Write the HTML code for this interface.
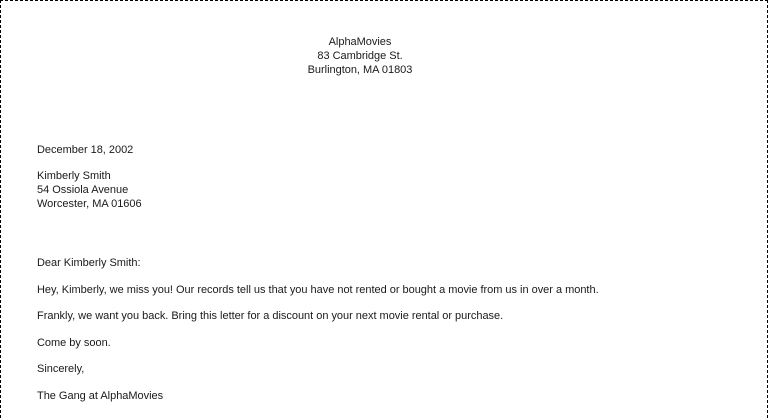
<!DOCTYPE html>
<html><head><style>
html,body{margin:0;padding:0;background:#fff;overflow:hidden;}
body{width:768px;height:418px;position:relative;overflow:hidden;font-family:"Liberation Sans",Arial,sans-serif;font-size:11px;color:#1a1a1a;letter-spacing:-0.02px;}
.frame{position:absolute;left:0;top:0;width:766px;height:417px;border:1px dashed #000;border-bottom:none;}
.t{position:absolute;line-height:14px;white-space:nowrap;}
.c{left:260px;width:200px;text-align:center;}
.l{left:37px;}
</style></head><body>
<div class="frame"></div>
<div class="t c" style="top:35px">AlphaMovies<br>83 Cambridge St.<br>Burlington, MA 01803</div>
<div class="t l" style="top:143px">December 18, 2002</div>
<div class="t l" style="top:169px">Kimberly Smith<br>54 Ossiola Avenue<br>Worcester, MA 01606</div>
<div class="t l" style="top:256px">Dear Kimberly Smith:</div>
<div class="t l" style="top:283px">Hey, Kimberly, we miss you! Our records tell us that you have not rented or bought a movie from us in over a month.</div>
<div class="t l" style="top:309px">Frankly, we want you back. Bring this letter for a discount on your next movie rental or purchase.</div>
<div class="t l" style="top:336px">Come by soon.</div>
<div class="t l" style="top:362px">Sincerely,</div>
<div class="t l" style="top:389px">The Gang at AlphaMovies</div>
</body></html>
